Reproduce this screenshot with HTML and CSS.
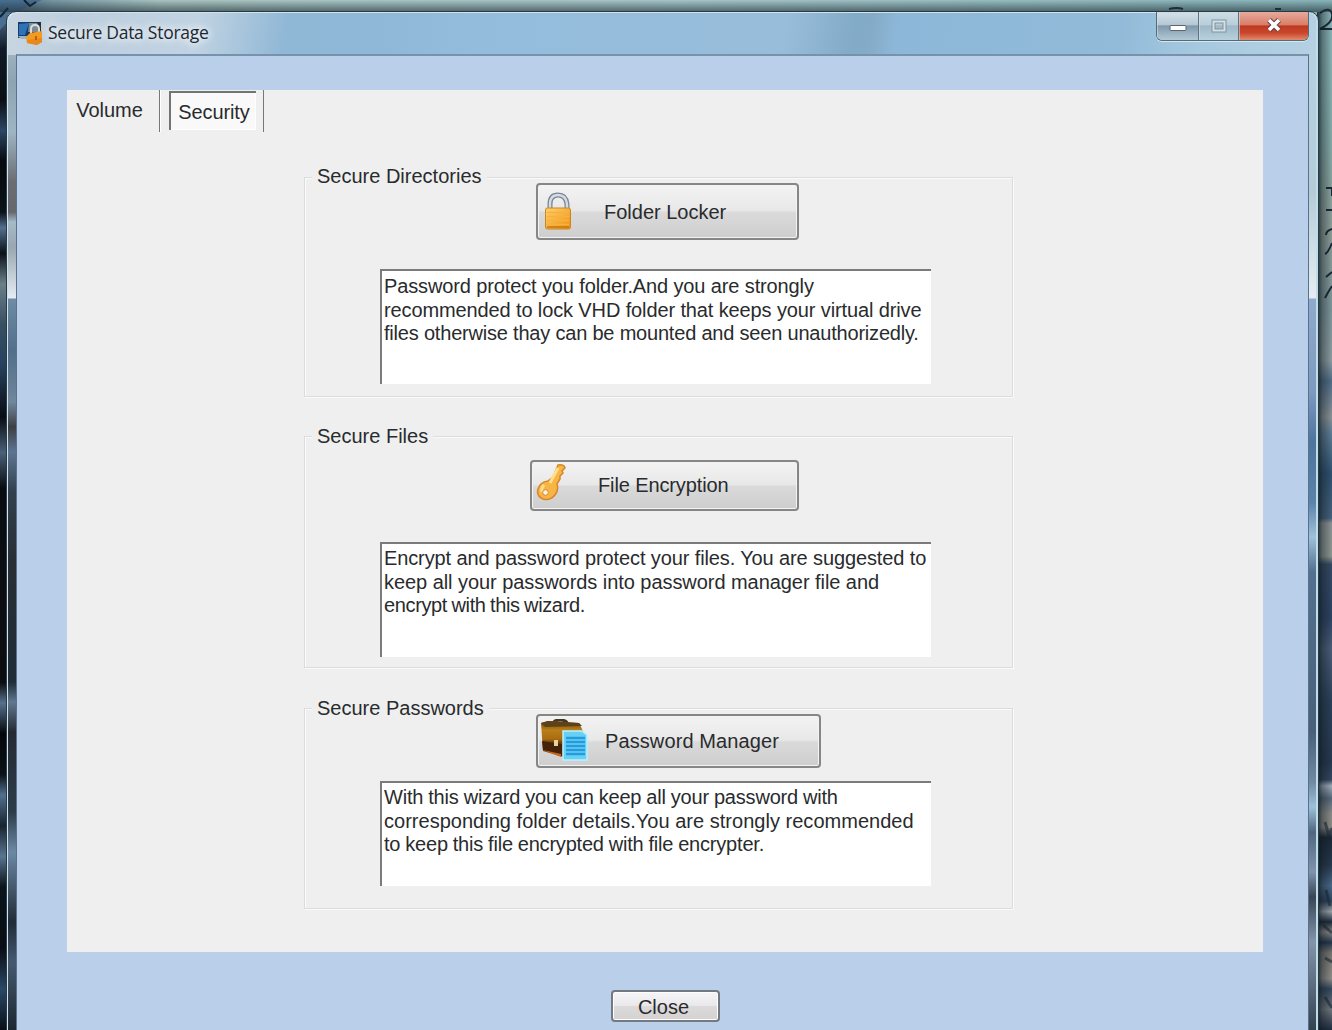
FILE: index.html
```
<!DOCTYPE html>
<html lang="en">
<head>
<meta charset="utf-8">
<title>Secure Data Storage</title>
<link rel="stylesheet" href="styles.css">
</head>
<body>
<div class="desktop">
  <svg class="wallpaper" width="1332" height="1030" viewBox="0 0 1332 1030" aria-hidden="true">
    <defs>
      <linearGradient id="sky" x1="0" x2="1" y1="0" y2="0">
        <stop offset="0" stop-color="#46627a"/><stop offset=".04" stop-color="#7797a4"/><stop offset=".12" stop-color="#a9c4c0"/><stop offset=".5" stop-color="#a6c5c8"/><stop offset="1" stop-color="#88b5b9"/>
      </linearGradient>
      <linearGradient id="shade" x1="0" x2="0" y1="0" y2="1"><stop offset="0" stop-color="#203038" stop-opacity="0"/><stop offset="1" stop-color="#203038" stop-opacity=".65"/></linearGradient>
      <linearGradient id="left" x1="0" x2="0" y1="0" y2="1">
        <stop offset="0" stop-color="#5a7fa0"/><stop offset=".04" stop-color="#101a28"/><stop offset=".09" stop-color="#0b0e14"/><stop offset=".12" stop-color="#2c4664"/><stop offset=".15" stop-color="#06090d"/><stop offset=".2" stop-color="#0c121a"/><stop offset=".215" stop-color="#54708e"/><stop offset=".24" stop-color="#0c1218"/><stop offset=".27" stop-color="#6b8088"/><stop offset=".31" stop-color="#384f62"/><stop offset=".35" stop-color="#26415f"/><stop offset=".4" stop-color="#090c12"/><stop offset=".435" stop-color="#4a6079"/><stop offset=".47" stop-color="#080c10"/><stop offset=".54" stop-color="#0b0e13"/><stop offset=".66" stop-color="#0c0d11"/><stop offset=".68" stop-color="#56718d"/><stop offset=".71" stop-color="#05070a"/><stop offset=".75" stop-color="#0b1118"/><stop offset=".77" stop-color="#52708f"/><stop offset=".8" stop-color="#18242f"/><stop offset=".83" stop-color="#587590"/><stop offset=".86" stop-color="#0a141a"/><stop offset=".92" stop-color="#090e14"/><stop offset=".96" stop-color="#2a4866"/><stop offset="1" stop-color="#090f17"/>
      </linearGradient>
      <linearGradient id="right" x1="0" x2="0" y1="0" y2="1">
        <stop offset="0" stop-color="#88b5b9"/><stop offset=".14" stop-color="#84a9a6"/><stop offset=".22" stop-color="#8c9c96"/><stop offset=".3" stop-color="#7c9599"/><stop offset=".35" stop-color="#8b9b9f"/><stop offset=".37" stop-color="#506c86"/><stop offset=".405" stop-color="#8a9296"/><stop offset=".42" stop-color="#5e7d93"/><stop offset=".46" stop-color="#2e506f"/><stop offset=".503" stop-color="#45617b"/><stop offset=".508" stop-color="#8c9294"/><stop offset=".54" stop-color="#8c968f"/><stop offset=".548" stop-color="#344963"/><stop offset=".6" stop-color="#2c4261"/><stop offset=".63" stop-color="#4b5d77"/><stop offset=".68" stop-color="#2b4058"/><stop offset=".74" stop-color="#26384f"/><stop offset=".757" stop-color="#34475f"/><stop offset=".763" stop-color="#a0acb8"/><stop offset=".775" stop-color="#55687a"/><stop offset=".79" stop-color="#8a8b88"/><stop offset=".803" stop-color="#8c8b86"/><stop offset=".813" stop-color="#1a2736"/><stop offset=".84" stop-color="#26384c"/><stop offset=".86" stop-color="#4a6888"/><stop offset=".875" stop-color="#2e435c"/><stop offset=".885" stop-color="#9aa0a6"/><stop offset=".895" stop-color="#1b2a3b"/><stop offset=".905" stop-color="#888684"/><stop offset=".915" stop-color="#22354b"/><stop offset=".925" stop-color="#767471"/><stop offset=".95" stop-color="#8f8c87"/><stop offset=".96" stop-color="#32465c"/><stop offset=".98" stop-color="#70757c"/><stop offset="1" stop-color="#1d2c3e"/>
      </linearGradient>
      <linearGradient id="shadow-r" x1="0" x2="1" y1="0" y2="0"><stop offset="0" stop-color="#0c171d" stop-opacity=".85"/><stop offset=".35" stop-color="#0c171d" stop-opacity=".4"/><stop offset="1" stop-color="#0c171d" stop-opacity="0"/></linearGradient>
    </defs>
    <rect width="1332" height="1030" fill="url(#sky)"/>
    <rect y="8" width="20" height="1022" fill="url(#left)"/>
    <path d="M0 0H42L16 12 0 30Z" fill="#486f91"/><path d="M24 0 30 6 36 2M0 17 8 8" stroke="#132130" stroke-width="2" fill="none"/>
    <rect x="1308" width="24" height="1030" fill="url(#right)"/>
    <g stroke="#1a2935" stroke-width="2" fill="none">
      <path d="M1169 9q8-2 14 0M1275 9h6"/>
      <path d="M1320 13q10-7 12 1t-12 15h12M1326 188h6v8M1326 210h6M1332 229q-6 2-6 6M1332 243q-4 10-7 11M1332 272l-6 5M1332 286q-4 6-7 12"/>
      <path d="M1325 822l4 14 3-8M1326 890l4 16M1323 925l9 8M1325 958l7 4M1325 997l7 11" stroke-width="3" opacity=".6"/>
    </g>
    <rect width="1332" height="12" fill="url(#shade)"/>
    <rect x="1317" y="12" width="15" height="1018" fill="url(#shadow-r)"/>
  </svg>

  <main class="window">
    <header class="titlebar">
      <svg class="app-icon" width="26" height="25" viewBox="0 0 26 25" aria-hidden="true">
        <path d="M1 1H24V17H1Z" fill="#163c68"/><path d="M2 3 12 2 8 14H2Z" fill="#2e73b6"/><path d="M12 2H23V11H11Z" fill="#7d8b91"/><path d="M20 1h4v10h-2Z" fill="#253239"/>
        <path d="M1 15H11V18H4Z" fill="#9fb3c5"/>
        <path d="M14 12V8q0-4 4-4t4 4v4" fill="none" stroke="#d8dde1" stroke-width="2"/>
        <path d="M9 16 13 12 25 10V21L20 24 10 22Z" fill="#f39a20"/><path d="M10 19 25 17V21L20 24 10 22Z" fill="#e8871b"/><path d="M19 15v4" stroke="#b9630f" stroke-width="2"/>
      </svg>
      <h1 class="title">Secure Data Storage</h1>
      <div class="controls">
        <button class="control minimize" aria-label="Minimize"><svg width="18" height="8"><rect x="1" y="1.5" width="16" height="5" rx="1" fill="#fff" stroke="#59666f"/></svg></button>
        <button class="control maximize" aria-label="Maximize"><svg width="16" height="14"><rect x="2.5" y="2.5" width="11" height="9" fill="none" stroke="#7f939f" stroke-width="4"/><rect x="2.5" y="2.5" width="11" height="9" fill="none" stroke="#d5e1e8" stroke-width="2"/></svg></button>
        <button class="control exit" aria-label="Close window"><svg width="18" height="16"><path d="M4 3 14 13M14 3 4 13" stroke="#61413f" stroke-width="5.5"/><path d="M4 3 14 13M14 3 4 13" stroke="#fff" stroke-width="3.6"/></svg></button>
      </div>
    </header>

    <div class="client">
      <section class="panel">
        <nav class="tabs">
          <button class="tab">Volume</button>
          <button class="tab selected">Security</button>
        </nav>

        <section class="group directories">
          <h2 class="legend">Secure Directories</h2>
          <button class="action">
            <svg class="icon" width="30" height="40" viewBox="0 0 30 40" aria-hidden="true">
              <defs><linearGradient id="gold" x1="0" x2="1" y1="0" y2="1"><stop offset="0" stop-color="#ffd36c"/><stop offset="1" stop-color="#ee8f14"/></linearGradient></defs>
              <path d="M6 18V12q0-9 8-9t9 9v6" fill="none" stroke="#7b8694" stroke-width="5"/><path d="M6 18V12q0-9 8-9t9 9v6" fill="none" stroke="#d6dce4" stroke-width="2.4"/>
              <rect x="1.5" y="16" width="25" height="21" rx="2" fill="url(#gold)" stroke="#cc851d"/>
              <path d="M3 20.500h22M3 24.500h22M3 28.500h22M3 32.500h22" stroke="#f9b13d" stroke-width="1.500"/><path d="M3 35h22" stroke="#c4770f" stroke-width="1.500"/>
            </svg>
            <span class="label">Folder Locker</span>
          </button>
          <div class="note"><span class="l1">Password protect you folder.And you are strongly</span><span class="l2">recommended to lock VHD folder that keeps your virtual drive</span><span class="l3">files otherwise thay can be mounted and seen unauthorizedly.</span></div>
        </section>

        <section class="group files">
          <h2 class="legend">Secure Files</h2>
          <button class="action">
            <svg class="icon" width="32" height="38" viewBox="0 0 32 38" aria-hidden="true">
              <path d="M22 2q6-1 7 3l-3 3 1 2-3 3 0 3-3 5q2 6-2 11-5 6-12 4-7-3-5-10 2-7 10-8l5-4Z" fill="#f7b545" stroke="#d8862c" stroke-width="1.500"/>
              <path d="M22 5 14 20M8 22q-3 3-2 7" fill="none" stroke="#ffdf8b" stroke-width="3"/><circle cx="9.500" cy="29.500" r="2.800" fill="#fff5e6" stroke="#d8862c"/>
            </svg>
            <span class="label">File Encryption</span>
          </button>
          <div class="note"><span class="l1">Encrypt and password protect your files. You are suggested to</span><span class="l2">keep all your passwords into password manager file and</span><span class="l3">encrypt with this wizard.</span></div>
        </section>

        <section class="group passwords">
          <h2 class="legend">Secure Passwords</h2>
          <button class="action">
            <svg class="icon" width="50" height="45" viewBox="0 0 50 45" aria-hidden="true">
              <defs><linearGradient id="leather" x1="0" x2="0" y1="0" y2="1"><stop offset="0" stop-color="#6b4510"/><stop offset=".25" stop-color="#b97f19"/><stop offset=".5" stop-color="#a96c12"/><stop offset=".6" stop-color="#714006"/><stop offset="1" stop-color="#8b4b12"/></linearGradient></defs>
              <path d="M13 6q0-5 7-5t8 5" fill="none" stroke="#49351d" stroke-width="3"/>
              <path d="M1 4 8 2 39 4 44 14 40 34 23 38 3 32Z" fill="url(#leather)"/>
              <path d="M1 4 8 2 39 4 42 7 5 8Z" fill="#5d4118"/><path d="M2 22 22 25 22 37 3 31Z" fill="#45230b"/><path d="M3 31 21 35v3Z" fill="#c46a20"/><path d="M14 21h4v6h-4z" fill="#e8d3a0"/>
              <path d="M23 12H42L47 16V41H23Z" fill="#68d0f5" stroke="#b8f1ff" stroke-width="1.500"/>
              <path d="M26 19h19M26 23h19M26 27h19M26 31h19M26 35h19" stroke="#269bdc" stroke-width="2.500"/>
            </svg>
            <span class="label">Password Manager</span>
          </button>
          <div class="note"><span class="l1">With this wizard you can keep all your password with</span><span class="l2">corresponding folder details.You are strongly recommended</span><span class="l3">to keep this file encrypted with file encrypter.</span></div>
        </section>
      </section>
      <button class="close">Close</button>
    </div>
  </main>
</div>
</body>
</html>
```
FILE: styles.css
```
* { box-sizing: border-box; }
body { margin: 0; overflow: hidden; font: 20px "Liberation Sans", Arial, sans-serif; color: #292b2d; }
button { margin: 0; padding: 0; border: 0; font: inherit; color: inherit; background: none; }
svg { display: block; flex: none; }
.desktop { position: relative; width: 1332px; height: 1030px; overflow: hidden; padding: 11px 13px 0 6px; }
.wallpaper { position: absolute; inset: 0; }

.window {
  position: relative; height: 1030px; padding: 0 9px; display: flex; flex-direction: column;
  border: 1px solid #263a46; border-radius: 10px 10px 0 0; box-shadow: inset 1px 1px #d3e4eb, inset -2px 0 #bfdde8;
  background:
    linear-gradient(100deg, #c8d6e1 0, #bdcfde 60px, #c1d3e2 190px, #8fb7d6 280px, #8fb8d8 370px, #93bcdc 450px, #98bddb 770px, #82abc7 838px, #84acc8 855px, #8db7d8 880px, #92bbd9 1100px, #a6c9df 1180px, #b7d2e3 1312px) 0 0 / 100% 43px no-repeat,
    linear-gradient(180deg, #b5c5d2 0, #8ea4b2 70px, #9eb5c5 120px, #6b6c71 170px, #67686c 200px, #a4bbc8 210px, #9aa6b0 235px, #e5edf3 286px, #6e8ca6 287px, #526e8a 340px, #70879c 390px, #3e3e44 415px, #5c7691 440px, #313f4e 480px, #292e34 550px, #1f2c38 670px, #60778f 690px, #252a32 720px, #2c3c4a 800px, #6c89a4 840px, #212b37 910px, #445970 950px, #1c2631 1018px) 0 0 / 50% 100% no-repeat,
    linear-gradient(180deg, #b7d2e3 0, #b5ccd8 180px, #e6edf2 286px, #8faacb 287px, #7e9ac0 380px, #4d749d 430px, #5b82a8 490px, #9fc0da 525px, #53708e 560px, #4a607a 720px, #7089a3 770px, #9dc0da 795px, #50677f 820px, #8193ad 860px, #364654 885px, #8495ab 930px, #33424f 1018px) 100% 0 / 50% 100% no-repeat;
}
.titlebar { height: 42px; flex: none; display: flex; padding-left: 1px; }
.app-icon { margin: 9px 5px 0 0; }
.title { margin: 9px 0 0; font: 17.5px/22px "Open Sans", "Noto Sans", sans-serif; color: #1c2830; letter-spacing: -.26px; text-shadow: 0 0 8px #fff, 0 0 10px #fff; }
.controls { display: flex; height: 29px; margin-left: auto; border: 1px solid #556b7a; border-top: 0; border-radius: 0 0 6px 6px; overflow: hidden; box-shadow: 0 1px #d7e7ee; }
.control { display: flex; justify-content: center; align-items: center; border-right: 1px solid #5e7482; background: linear-gradient(#cfdde5 0 10%, #b4c8d4 45%, #8198a8 50%, #b2cad8); box-shadow: inset 1px 0 #d5e2ea88; }
.minimize { width: 42px; padding-top: 4px; }
.maximize { width: 40px; background: linear-gradient(#cddde6, #b9ced9 45%, #9fb8c7 50%, #b8d1de); }
.exit { width: 69px; border: 0; padding-bottom: 2px; background: linear-gradient(#e7aa9b, #d87e69 45%, #bf3921 50%, #c9472c 75%, #e28b6e); }

.client { flex: 1; min-height: 0; padding: 34px 44px 0 50px; display: flex; flex-direction: column; align-items: center; border: 1px solid #57728b; border-top: 2px solid #7793ac; border-bottom: 0; background: #bacfe9; }
.panel { width: 1196px; align-self: flex-start; height: 862px; flex: none; background: #efefef; }
.tabs { display: flex; height: 42px; align-items: flex-start; }
.tab { width: 93px; height: 42px; border-right: 1px solid #777; box-shadow: 1px 0 #fff; padding: 0 7px 2px 0; }
.tab.selected { width: 87px; height: 39px; margin: 1px 0 0 9px; border: solid #747474; border-width: 2px 0 0 2px; background: #f9f9f9; box-shadow: inset -1px -1px #fff; padding: 1px 0 0 1px; letter-spacing: -.1px; position: relative; }
.tab.selected::after { content: ""; position: absolute; left: 92px; top: -3px; height: 42px; border-left: 1px solid #777; }

.group { width: 709px; margin-left: 237px; border: 1px solid #dcdcdc; box-shadow: inset 1px 1px #fafafa, 1px 1px #fafafa; }
.directories { height: 220px; margin-top: 45px; }
.files { height: 232px; margin-top: 39px; }
.passwords { height: 201px; margin-top: 40px; }
.legend { width: fit-content; height: 22px; margin: -12px 0 0 7px; padding: 0 5px; font-size: 20px; font-weight: 400; line-height: 21px; background: #efefef; }
.files .legend, .passwords .legend { line-height: 23px; }
.action { display: flex; align-items: center; border: 2px solid #868686; border-radius: 4px; background: linear-gradient(#f3f3f3, #e8e8e8 48%, #dadada 52%, #cecece); box-shadow: inset 0 0 0 1px #f3f3f3; }
.directories .action { width: 263px; height: 57px; margin: -5px 0 29px 231px; padding: 1px 0 0 6px; }
.directories .label { margin-left: 30px; }
.files .action { width: 269px; height: 51px; margin: 13px 0 31px 225px; padding-left: 4px; }
.files .icon { margin-bottom: 7px; }
.files .label { margin-left: 30px; letter-spacing: -.12px; }
.passwords .action { width: 285px; height: 54px; margin: -5px 0 13px 231px; padding-left: 2px; }
.passwords .label { margin-left: 15px; letter-spacing: .1px; }
.note { width: 551px; height: 115px; margin-left: 75px; padding: 4px 0 0 2px; border: solid #7b7b7b; border-width: 2px 0 0 2px; background: #fff; line-height: 23.7px; }
.files .note { padding-top: 3px; }
.passwords .note { height: 105px; padding-top: 3px; }
.note span { display: block; white-space: nowrap; }
.directories .l1 { letter-spacing: -.125px; }
.directories .l2 { letter-spacing: -.12px; }
.directories .l3 { letter-spacing: -.2px; }
.files .l1 { letter-spacing: -.115px; }
.files .l2 { letter-spacing: -.055px; }
.files .l3 { letter-spacing: -.36px; word-spacing: -.8px; }
.passwords .l1 { letter-spacing: -.2px; word-spacing: -.3px; }
.passwords .l2 { letter-spacing: .02px; }
.passwords .l3 { letter-spacing: -.2px; word-spacing: -.4px; }

.close { width: 109px; height: 32px; flex: none; margin: 38px 0 0; border: 2px solid #727981; border-radius: 4px; background: linear-gradient(#f5f5f7, #eae8ea 48%, #dcd9d9 52%, #d3d2d2); box-shadow: inset 0 0 0 1px #fff; padding: 2px 4px 0 0; }
```
